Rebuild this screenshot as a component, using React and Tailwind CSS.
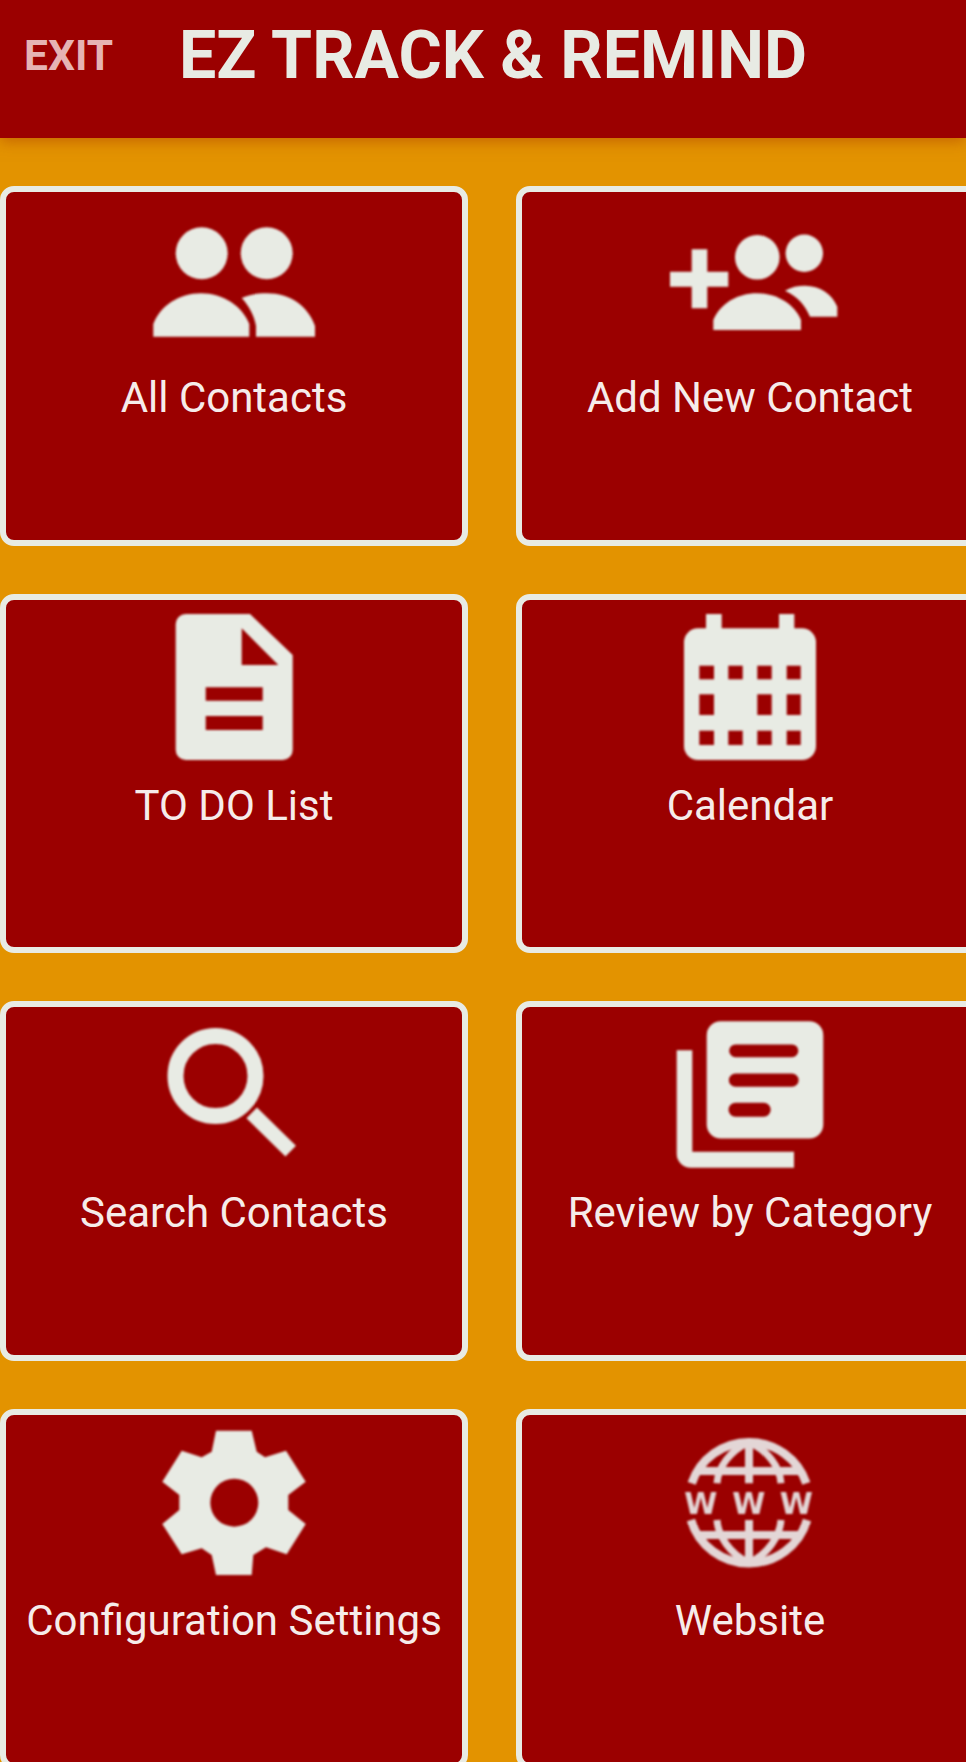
import React from 'react'

// All glyphs share one 200x160 box so the tiles stay aligned
const Icon = ({ children, className = 'fill-[#e8ebe4]' }) => (
  <svg viewBox="0 0 200 160" className={`h-[160px] w-[200px] shrink-0 blur-[1px] ${className}`}>
    {children}
  </svg>
)

const ContactsIcon = () => (
  <Icon>
    <circle cx="67.7" cy="51.3" r="26" />
    <circle cx="132.7" cy="51.3" r="26" />
    <path d="M19.3 134.7V122C26 104 45 91.3 67 91.3S108 104 115.3 122V134.7Z" />
    <path d="M107.7 96C115 92.5 124 91.3 133 91.3C156 91.3 174 104 181 124V134.7H122V124C120 113 115 104 107.7 96Z" />
  </Icon>
)

const AddContactIcon = () => (
  <Icon>
    <path d="M41.7 47.3H57.3V69.7H78.3V84.7H57.3V106.3H41.7V84.7H20V69.7H41.7Z" />
    <circle cx="107.3" cy="55.3" r="22.3" />
    <circle cx="154.3" cy="51.3" r="18.7" />
    <path d="M63.3 128V118C70 102 87 91.3 107 91.3S144 102 151 118V128Z" />
    <path d="M135 88.7C141 85 148 83.7 155 83.7C170 83.7 182 92 187.3 104.7V114.7H160C155 103 147 94 135 88.7Z" />
  </Icon>
)

const TodoIcon = () => (
  <Icon>
    <path
      fillRule="evenodd"
      d="M51.7 4H116L158.7 45V140A10 10 0 0 1 148.7 150H51.7A10 10 0 0 1 41.7 140V14A10 10 0 0 1 51.7 4ZM107.7 18.3V55H144.3ZM71.7 77.3V90.7H128.7V77.3ZM71.7 106V120H128.7V106Z"
    />
  </Icon>
)

const calendarCols = [[49.3, 14.7], [78.3, 14.4], [107.3, 14.4], [136.7, 14]]

const CalendarIcon = () => (
  <Icon>
    <path d="M56 4H71.7V20H129V4H144.3V20H56Z" />
    <path
      fillRule="evenodd"
      d="M48 18.3H152A14 14 0 0 1 166 32.3V136A14 14 0 0 1 152 150H48A14 14 0 0 1 34 136V32.3A14 14 0 0 1 48 18.3Z"
    />
    {calendarCols.map(([x, w], i) => (
      <React.Fragment key={x}>
        <rect x={x} y="55.7" width={w} height="13.6" className="fill-[#9b0000]" />
        {i !== 1 && <rect x={x} y="84.3" width={w} height="20.7" className="fill-[#9b0000]" />}
        <rect x={x} y="120.7" width={w} height="14.3" className="fill-[#9b0000]" />
      </React.Fragment>
    ))}
  </Icon>
)

const SearchIcon = () => (
  <Icon>
    <circle cx="81.5" cy="59" r="40" fill="none" stroke="#e8ebe4" strokeWidth="16" />
    <path d="M117.7 95.8L156.7 134.2" fill="none" stroke="#e8ebe4" strokeWidth="15" />
  </Icon>
)

const CategoryIcon = () => (
  <Icon>
    <path
      fillRule="evenodd"
      d="M70.7 4.2H159.3A14 14 0 0 1 173.3 18.2V107.5A14 14 0 0 1 159.3 121.5H70.7A14 14 0 0 1 56.7 107.5V18.2A14 14 0 0 1 70.7 4.2ZM85.5 27.5A6.3 6.3 0 0 0 85.5 40.2H142A6.3 6.3 0 0 0 142 27.5ZM85.5 56.5A6.6 6.6 0 0 0 85.5 69.8H142A6.6 6.6 0 0 0 142 56.5ZM85.5 85.8A7 7 0 0 0 85.5 99.8H113.7A7 7 0 0 0 113.7 85.8Z"
    />
    <path d="M26.7 33.2H42.3V134.8H144V150.8H40.7A14 14 0 0 1 26.7 136.8Z" />
  </Icon>
)

const SettingsIcon = () => (
  <Icon>
    <path
      fillRule="evenodd"
      d="M82 5.7H117.7L122.7 26.7L131 32.3L152 25.7L171.7 56.7L154.3 70V85L171.7 99L152.7 129.3L132 122.3L119.3 130L117.7 150H82L77.7 130L67.7 123.3L47.7 129.3L28.3 99L45.3 85V70L28.3 56.7L47.7 25.7L67.7 32.3L77.7 26.7ZM100.3 53.7A24 24 0 1 0 100.3 101.7A24 24 0 1 0 100.3 53.7Z"
    />
  </Icon>
)

const GlobeIcon = () => (
  <Icon className="fill-[#e3d6d6]">
    {/* the two caps of the globe, with the band left open for the letters */}
    <g fill="none" stroke="#e3d6d6">
      <path d="M41.7 58.3A60.5 60.5 0 0 1 156.3 58.3" strokeWidth="8.5" />
      <path d="M41 95A60.5 60.5 0 0 0 157 95" strokeWidth="8.5" />
      <path d="M99 17V58.3M99 95V138M48 46H150M48 110H150" strokeWidth="8" />
      <path d="M67 58.3C68 42 80 26 99 17C118 26 130 42 131 58.3" strokeWidth="7" />
      <path d="M67 95C68 111 80 129 99 138C118 129 130 111 131 95" strokeWidth="7" />
    </g>
    {[50.7, 98.7, 146.3].map((x) => (
      <text key={x} x={x} y="89" textAnchor="middle" className="font-['DejaVu_Sans',sans-serif] text-[30px] font-bold">
        W
      </text>
    ))}
  </Icon>
)

const tiles = [
  { label: 'All Contacts', icon: ContactsIcon },
  { label: 'Add New Contact', icon: AddContactIcon },
  { label: 'TO DO List', icon: TodoIcon },
  { label: 'Calendar', icon: CalendarIcon },
  { label: 'Search Contacts', icon: SearchIcon },
  { label: 'Review by Category', icon: CategoryIcon },
  { label: 'Configuration Settings', icon: SettingsIcon },
  { label: 'Website', icon: GlobeIcon },
]

const App = () => {
  return (
    <div className="h-screen overflow-hidden bg-[#e39300] font-['Roboto',sans-serif]">
      {/* Header */}
      <header className="flex h-[138px] items-center bg-[#9b0000] pb-[25px] pl-[24px] shadow-[0_3px_14px_rgba(170,60,0,0.55)]">
        <span className="w-[155px] text-[42.5px] font-bold leading-none text-[#e6b3b3]">EXIT</span>
        <h1 className="text-[66.2px] font-bold leading-none text-[#e8ebe4]">EZ TRACK &amp; REMIND</h1>
      </header>

      {/* Menu tiles */}
      <main className="mt-[48px] grid w-[984px] grid-cols-[468px_468px] gap-x-[48px] gap-y-[48px]">
        {tiles.map(({ label, icon: TileIcon }) => (
          <button
            key={label}
            className="flex h-[359.7px] flex-col items-center rounded-[14px] border-[6px] border-[#e8ebe4] bg-[#9b0000] pt-[10px]"
          >
            <TileIcon />
            <span className="mt-[12px] whitespace-nowrap text-[42px] leading-[48px] text-[#f6ecea]">{label}</span>
          </button>
        ))}
      </main>
    </div>
  )
}

export default App
